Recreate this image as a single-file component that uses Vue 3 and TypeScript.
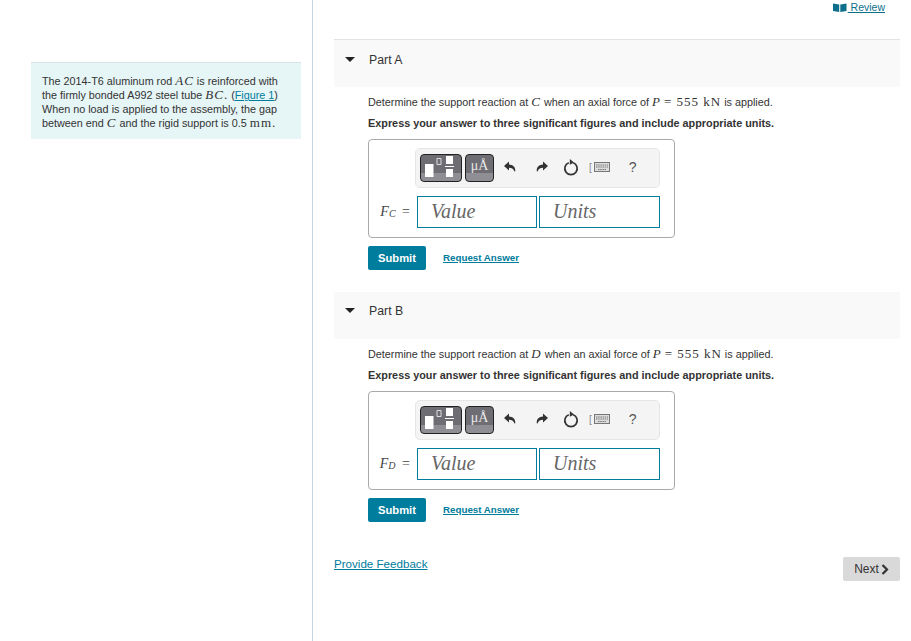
<template>
  <div class="page">
    <aside class="left">
      <div class="intro">
        The 2014-T6 aluminum rod <i class="m">AC</i> is reinforced with<br />
        the firmly bonded A992 steel tube <i class="m">BC</i><span class="m">.</span> (<a href="#">Figure 1</a>)<br />
        When no load is applied to the assembly, the gap<br />
        between end <i class="m">C</i> and the rigid support is 0.5 <span class="m">mm</span><span class="m">.</span>
      </div>
    </aside>

    <main class="right">
      <div class="review-row">
        <a href="#" class="review">
          <svg width="14" height="9" viewBox="0 0 14 9"><path d="M0 0.500 6.200 1.500v7.500L0 8zM13.500 0.500 7.300 1.500v7.500l6.200-1z" fill="#0e6f8c" /></svg>
          <span>&nbsp;Review</span>
        </a>
      </div>

      <section v-for="part in parts" :key="part.name" class="part">
        <div class="part-head">
          <span class="caret"></span>
          <span class="part-name">{{ part.name }}</span>
        </div>
        <div class="part-body">
          <p class="question">
            Determine the support reaction at <i class="m">{{ part.point }}</i> when an axial force of
            <i class="m">P</i> <span class="m">= 555 kN</span> is applied.
          </p>
          <p class="express">Express your answer to three significant figures and include appropriate units.</p>

          <div class="answer">
            <div class="toolbar">
              <button class="tool tool-tpl" type="button">
                <svg width="38" height="26" viewBox="0 0 38 26">
                  <path d="M3 9h8.500v13H3z" fill="#fff" />
                  <path d="M15 3.500h4v6h-4z" fill="none" stroke="#ddd" stroke-width="1" />
                  <path d="M24 1h7v8h-7zM24 14h7v8h-7z" fill="#fff" />
                  <path d="M23 11.500h9" stroke="#fff" stroke-width="1" />
                </svg>
              </button>
              <button class="tool tool-unit" type="button">
                <span class="unit-text">μÅ</span>
              </button>
              <svg class="ico undo" width="14" height="14" viewBox="0 0 14 14">
                <path d="M6 1.500 1 6l5 4.500V7.800c2.600 0 4.400.8 5.500 3.700.6.200.8-.2.8-.8C12.300 6.800 9.800 4.600 6 4.500z" fill="#333" />
              </svg>
              <svg class="ico redo" width="14" height="14" viewBox="0 0 14 14">
                <path d="M8 1.500 13 6l-5 4.500V7.800c-2.600 0-4.400.8-5.500 3.700-.6.200-.8-.2-.8-.8C1.700 6.800 4.200 4.600 8 4.500z" fill="#333" />
              </svg>
              <svg class="ico reset" width="16" height="18" viewBox="0 0 16 18">
                <path d="M10.200 4.700a6.200 6.200 0 1 1-4.400 0" fill="none" stroke="#333" stroke-width="1.700" />
                <path d="M6.800 1 11 4.600 6.800 6.800z" fill="#333" />
              </svg>
              <span class="bracket">[</span>
              <svg class="ico keys" width="16" height="10" viewBox="0 0 16 10">
                <rect x="0.500" y="0.500" width="15" height="9" fill="#ddd" stroke="#777" />
                <path d="M2 3h12M2 5h12M4 7.500h8" stroke="#777" stroke-width="1" stroke-dasharray="1.500 .7" />
              </svg>
              <span class="help">?</span>
            </div>
            <div class="inputs">
              <span class="label"><i>F</i><i class="sub">{{ part.point }}</i> =</span>
              <div class="field value">Value</div>
              <div class="field units">Units</div>
            </div>
          </div>

          <div class="actions">
            <button class="submit" type="button">Submit</button>
            <a href="#" class="request">Request Answer</a>
          </div>
        </div>
      </section>

      <div class="bottom">
        <a href="#" class="feedback">Provide Feedback</a>
        <button class="next" type="button">
          Next
          <svg width="8" height="11" viewBox="0 0 8 11"><path d="M1.500 1 6 5.500 1.500 10" fill="none" stroke="#333" stroke-width="2.200" /></svg>
        </button>
      </div>
    </main>
  </div>
</template>

<script setup lang="ts">
interface Part {
  name: string
  point: string
}

const parts: Part[] = [
  { name: 'Part A', point: 'C' },
  { name: 'Part B', point: 'D' }
]
</script>

<style>
html,
body {
  margin: 0;
  background: #fff;
}
</style>

<style scoped>
.page {
  display: flex;
  height: 641px;
  overflow: hidden;
  font-family: "Liberation Sans", Arial, sans-serif;
  color: #333;
}

.left {
  width: 313px;
  flex: none;
  box-sizing: border-box;
  padding: 62px 11px 0 31px;
  border-right: 1px solid #c3d3e0;
}

.intro {
  box-sizing: border-box;
  height: 77px;
  padding: 11px 0 0 11px;
  background: #e6f5f6;
  border-top: 1px solid #d5e5e6;
  font-size: 10.800px;
  line-height: 13.400px;
  white-space: nowrap;
}

.intro a {
  color: #007c9c;
}

.m {
  font-family: "Liberation Serif", "Times New Roman", serif;
  font-size: 13px;
  letter-spacing: 1px;
  line-height: 1;
}

.right {
  flex: 1;
  padding: 0 11px 0 21px;
  min-width: 0;
}

.review-row {
  display: flex;
  justify-content: flex-end;
  height: 39px;
  padding-right: 15px;
  box-sizing: border-box;
}

.review {
  display: flex;
  align-items: flex-start;
  height: 14px;
  font-size: 10.500px;
  line-height: 14px;
  color: #0e6f8c;
  text-decoration: underline;
}

.review svg {
  margin: 3px 1px 0 -1px;
}

.part-head {
  display: flex;
  align-items: flex-start;
  box-sizing: border-box;
  height: 48px;
  padding: 12px 0 0 11px;
  background: #f9f9f9;
  border-top: 1px solid #e2e2e2;
}

.part + .part .part-head {
  height: 47px;
  margin-top: 22px;
  border-top: 0;
  padding-top: 11px;
}

.caret {
  width: 0;
  height: 0;
  margin-top: 5px;
  border-left: 5px solid transparent;
  border-right: 5px solid transparent;
  border-top: 5px solid #222;
}

.part-name {
  margin-left: 14px;
  font-size: 12.300px;
  line-height: 16px;
  color: #333;
}

.part-body {
  padding-left: 34px;
}

.question {
  margin: 8px 0 0;
  height: 15px;
  font-size: 10.800px;
  line-height: 15px;
  white-space: nowrap;
}

.express {
  margin: 6px 0 0;
  height: 15px;
  font-size: 10.850px;
  line-height: 15px;
  font-weight: 700;
  white-space: nowrap;
}

.answer {
  box-sizing: border-box;
  width: 307px;
  height: 99px;
  margin-top: 8px;
  padding: 8px 14px 0 11px;
  border: 1px solid #aaa;
  border-radius: 4px;
}

.toolbar {
  display: flex;
  align-items: center;
  box-sizing: border-box;
  width: 245px;
  height: 40px;
  margin-left: 35px;
  padding: 0 0 2px 4px;
  background: #f4f4f4;
  border: 1px solid #e6e6e6;
  border-radius: 5px;
}

.tool {
  display: flex;
  align-items: center;
  justify-content: center;
  box-sizing: border-box;
  height: 28px;
  margin-top: 2px;
  padding: 0;
  border: 1px solid #222;
  border-radius: 4px;
  background: linear-gradient(#6f6d74 0 68%, #8f8e95 68%);
}

.tool-tpl {
  width: 42px;
}

.tool-unit {
  width: 29px;
  margin-left: 3px;
}

.unit-text {
  font-family: "Liberation Serif", serif;
  font-size: 14px;
  color: #e8e8e8;
  margin-top: -4px;
}

.ico {
  flex: none;
}

.undo {
  margin-left: 9px;
}

.redo {
  margin-left: 18px;
}

.reset {
  margin-left: 14px;
}

.bracket {
  margin-left: 10px;
  font-size: 10px;
  color: #888;
}

.keys {
  margin-left: 2px;
}

.help {
  margin-left: 19px;
  font-size: 14px;
  color: #555;
}

.inputs {
  display: flex;
  align-items: stretch;
  gap: 2px;
  margin-top: 8px;
  height: 32px;
}

.label {
  display: flex;
  align-items: center;
  justify-content: flex-end;
  width: 30px;
  margin-right: 5px;
  font-family: "Liberation Serif", serif;
  font-size: 14px;
  color: #444;
  white-space: pre;
}

.label .sub {
  font-size: 10px;
  margin: 2px 3px 0 0;
}

.field {
  box-sizing: border-box;
  width: 121px;
  padding-left: 13px;
  border: 1px solid #007c9c;
  font-family: "Liberation Serif", serif;
  font-style: italic;
  font-size: 20px;
  line-height: 28px;
  color: #666;
}

.value {
  width: 120px;
}

.actions {
  display: flex;
  align-items: center;
  gap: 17px;
  margin-top: 8px;
  height: 24px;
}

.submit {
  width: 58px;
  height: 24px;
  padding: 0;
  border: 0;
  border-radius: 2px;
  background: #007c9c;
  color: #fff;
  font-family: inherit;
  font-size: 11.200px;
  font-weight: 700;
}

.request {
  margin-top: -1px;
  font-size: 9.750px;
  font-weight: 700;
  color: #007c9c;
}

.bottom {
  display: flex;
  justify-content: space-between;
  align-items: flex-start;
  margin-top: 33px;
}

.feedback {
  margin-top: 2px;
  font-size: 11.600px;
  color: #007c9c;
}

.next {
  display: flex;
  align-items: center;
  justify-content: center;
  gap: 2px;
  width: 57px;
  height: 24px;
  margin-top: 2px;
  padding: 0;
  border: 0;
  border-radius: 2px;
  background: #d9d9d9;
  color: #333;
  font-family: inherit;
  font-size: 12px;
}
</style>
